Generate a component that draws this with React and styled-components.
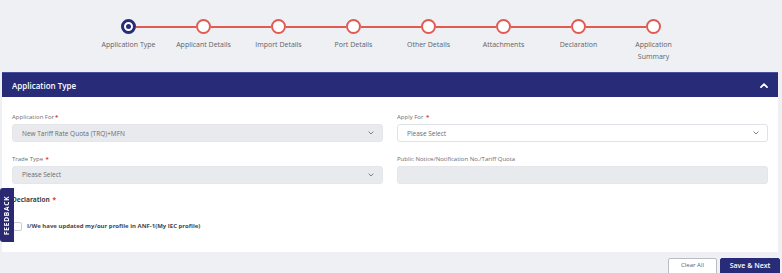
import React from 'react';
import styled, { createGlobalStyle } from 'styled-components';

const GlobalStyle = createGlobalStyle`
	* {
		margin: 0;
		padding: 0;
		box-sizing: border-box;
	}
	body {
		background: #eef0f4;
		font-family: 'Open Sans', 'Liberation Sans', sans-serif;
		color: #555;
	}
`;

const NAVY = '#272b78';
const RED = '#e25a52';

const Stepper = styled.div`
	display: flex;
	justify-content: center;
	height: 72px;
	padding-top: 19px;
`;

const Step = styled.div`
	width: 75px;
	display: flex;
	flex-direction: column;
	align-items: center;
`;

const CircleRow = styled.div`
	width: 100%;
	display: flex;
	align-items: center;
`;

const Line = styled.div`
	flex: 1;
	height: 2px;
	background: ${(p) => (p.$hidden ? 'transparent' : RED)};
`;

const Circle = styled.div`
	width: 15px;
	height: 15px;
	border-radius: 50%;
	background: #fff;
	border: ${(p) => (p.$done ? `3px solid ${NAVY}` : `2px solid ${RED}`)};
	display: flex;
	align-items: center;
	justify-content: center;
`;

const Dot = styled.div`
	width: 5px;
	height: 5px;
	border-radius: 50%;
	background: ${NAVY};
`;

const StepLabel = styled.div`
	margin-top: 5px;
	font-size: 7px;
	line-height: 12px;
	color: #5f6268;
	text-align: center;
	padding: 0 6px;
`;

const Card = styled.div`
	margin: 0 4px 0 2px;
	background: #fff;
`;

const CardHeader = styled.div`
	height: 25px;
	background: ${NAVY};
	border-top: 1px solid #4a50a0;
	display: flex;
	align-items: center;
	justify-content: space-between;
	padding: 0 10px;
	color: #fff;
	font-size: 8px;
	font-weight: 600;
`;

const CardBody = styled.div`
	padding: 16px 10px 21px;
`;

const Grid = styled.div`
	display: grid;
	grid-template-columns: 1fr 1fr;
	column-gap: 14px;
	row-gap: 12.5px;
`;

const Field = styled.div`
	display: flex;
	flex-direction: column;
	gap: 3px;
`;

const Label = styled.div`
	font-size: 6px;
	line-height: 8px;
	color: #6b6e73;
`;

const Req = styled.span`
	color: #e0323a;
	font-weight: 700;
	margin-left: 1px;
`;

const Select = styled.div`
	height: 18px;
	border-radius: 3px;
	border: 1px solid ${(p) => (p.$disabled ? '#e4e6ea' : '#dfe2e6')};
	background: ${(p) => (p.$disabled ? '#e8eaed' : '#fff')};
	display: flex;
	align-items: center;
	justify-content: space-between;
	padding: 0 8px 0 9px;
	font-size: 6.5px;
	color: #6a6d72;
`;

const Declaration = styled.div`
	margin-top: 12px;
	font-size: 6.5px;
	line-height: 8px;
	font-weight: 700;
	color: #3d3f44;
`;

const CheckRow = styled.label`
	margin-top: 18px;
	display: flex;
	align-items: center;
	gap: 5px;
	padding-left: 1px;
	font-size: 6px;
	font-weight: 700;
	color: #45474c;
`;

const Box = styled.span`
	width: 9px;
	height: 9px;
	border: 1px solid #c9ccd1;
	border-radius: 2px;
	background: #fff;
`;

const Footer = styled.div`
	display: flex;
	justify-content: flex-end;
	gap: 3px;
	padding: 6px 2px 0 0;
`;

const Button = styled.button`
	height: 20px;
	width: ${(p) => (p.$primary ? '60px' : '49px')};
	border-radius: 2px;
	border: 1px solid ${(p) => (p.$primary ? NAVY : '#b9bcc4')};
	background: ${(p) => (p.$primary ? NAVY : '#fff')};
	color: ${(p) => (p.$primary ? '#fff' : '#5c6070')};
	font-family: inherit;
	font-size: ${(p) => (p.$primary ? '7px' : '6px')};
	font-weight: ${(p) => (p.$primary ? 600 : 400)};
	padding-bottom: 5px;
`;

const FeedbackTab = styled.div`
	position: fixed;
	left: 0;
	top: 188px;
	width: 14px;
	height: 54px;
	background: #2a2872;
	border-radius: 0 3px 3px 0;
	display: flex;
	align-items: center;
	justify-content: center;
	color: #fff;
	font-size: 6.5px;
	font-weight: 700;
	letter-spacing: 0.8px;
	text-transform: uppercase;
	writing-mode: vertical-rl;
	transform: rotate(180deg);
`;

const Chevron = ({ up, color, w = 8, h = 5 }) => (
	<svg width={w} height={h} viewBox="0 0 8 5" fill="none">
		<path
			d={up ? 'M1 4.2 L4 1.2 L7 4.2' : 'M1.2 1 L4 3.8 L6.8 1'}
			stroke={color}
			strokeWidth={up ? 1.8 : 1.1}
			strokeLinecap="round"
			strokeLinejoin="round"
		/>
	</svg>
);

const steps = [
	'Application Type',
	'Applicant Details',
	'Import Details',
	'Port Details',
	'Other Details',
	'Attachments',
	'Declaration',
	'Application Summary',
];

export default function App() {
	return (
		<>
			<GlobalStyle />
			<Stepper>
				{steps.map((s, i) => (
					<Step key={s}>
						<CircleRow>
							<Line $hidden={i === 0} />
							<Circle $done={i === 0}>{i === 0 && <Dot />}</Circle>
							<Line $hidden={i === steps.length - 1} />
						</CircleRow>
						<StepLabel>{s}</StepLabel>
					</Step>
				))}
			</Stepper>
			<Card>
				<CardHeader>
					<span>Application Type</span>
					<Chevron up color="#fff" />
				</CardHeader>
				<CardBody>
					<Grid>
						<Field>
							<Label>
								Application For<Req>*</Req>
							</Label>
							<Select $disabled>
								<span>New Tariff Rate Quota (TRQ)+MFN</span>
								<Chevron color="#666" w={6} h={4} />
							</Select>
						</Field>
						<Field>
							<Label>
								Apply For <Req>*</Req>
							</Label>
							<Select>
								<span>Please Select</span>
								<Chevron color="#666" w={6} h={4} />
							</Select>
						</Field>
						<Field>
							<Label>
								Trade Type <Req>*</Req>
							</Label>
							<Select $disabled>
								<span>Please Select</span>
								<Chevron color="#666" w={6} h={4} />
							</Select>
						</Field>
						<Field>
							<Label>Public Notice/Notification No./Tariff Quota</Label>
							<Select $disabled />
						</Field>
					</Grid>
					<Declaration>
						Declaration <Req>*</Req>
					</Declaration>
					<CheckRow>
						<Box />
						I/We have updated my/our profile in ANF-1(My IEC profile)
					</CheckRow>
				</CardBody>
			</Card>
			<Footer>
				<Button>Clear All</Button>
				<Button $primary>Save &amp; Next</Button>
			</Footer>
			<FeedbackTab>Feedback</FeedbackTab>
		</>
	);
}
